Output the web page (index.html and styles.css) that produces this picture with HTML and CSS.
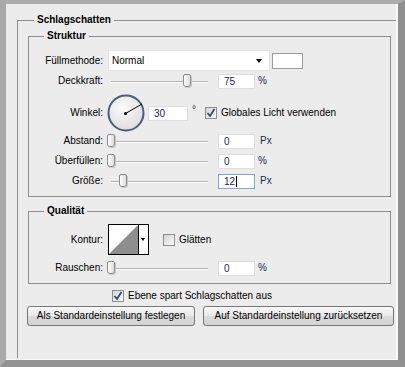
FILE: index.html
```html
<!DOCTYPE html>
<html lang="de">
<head>
    <meta charset="UTF-8">
    <title>Schlagschatten</title>
    <link rel="stylesheet" href="styles.css">
</head>
<body>
    <div class="frame">
        <div class="group outer">
            <div class="group-title">Schlagschatten</div>

            <div class="box">
                <div class="group-title">Struktur</div>
                <div class="row row-mode">
                    <span class="label">Füllmethode:</span>
                    <div class="select"><span>Normal</span><span class="arrow"></span></div>
                    <div class="swatch"></div>
                </div>
                <div class="row row-opacity">
                    <span class="label">Deckkraft:</span>
                    <div class="slider"><span class="thumb" style="left:76px"></span></div>
                    <div class="field">75</div><span class="unit">%</span>
                </div>
                <div class="row row-angle">
                    <span class="label">Winkel:</span>
                    <svg class="dial" width="38" height="38" viewBox="0 0 38 38">
                        <defs>
                            <radialGradient id="dialFill" cx="40%" cy="35%" r="70%">
                                <stop offset="0" stop-color="#fbfbfb"/>
                                <stop offset="1" stop-color="#dcdcdc"/>
                            </radialGradient>
                        </defs>
                        <circle cx="19" cy="19" r="17.5" fill="url(#dialFill)" stroke="#4d5c7c" stroke-width="2"/>
                        <line x1="18.5" y1="19.5" x2="35" y2="10" stroke="#000" stroke-width="1"/>
                        <circle cx="18.5" cy="19.5" r="1.6" fill="#000"/>
                    </svg>
                    <div class="field field-angle">30</div><span class="unit deg">°</span>
                    <span class="check check-light"><span class="checkbox checked"></span>Globales Licht verwenden</span>
                </div>
                <div class="row row-slider">
                    <span class="label">Abstand:</span>
                    <div class="slider"><span class="thumb" style="left:0px"></span></div>
                    <div class="field">0</div><span class="unit px">Px</span>
                </div>
                <div class="row row-slider">
                    <span class="label">Überfüllen:</span>
                    <div class="slider"><span class="thumb" style="left:0px"></span></div>
                    <div class="field">0</div><span class="unit">%</span>
                </div>
                <div class="row row-slider">
                    <span class="label">Größe:</span>
                    <div class="slider"><span class="thumb" style="left:12px"></span></div>
                    <div class="field focus">12<span class="caret"></span></div><span class="unit px">Px</span>
                </div>
            </div>

            <div class="box quality">
                <div class="group-title">Qualität</div>
                <div class="row row-contour">
                    <span class="label">Kontur:</span>
                    <div class="contour">
                        <svg width="29" height="29" viewBox="0 0 29 29">
                            <rect width="29" height="29" fill="#fff"/>
                            <polygon points="0,29 29,0 29,29" fill="#8e8e8e"/>
                        </svg>
                        <span class="contour-arrow"></span>
                    </div>
                    <span class="check check-smooth"><span class="checkbox"></span>Glätten</span>
                </div>
                <div class="row row-slider row-noise">
                    <span class="label">Rauschen:</span>
                    <div class="slider"><span class="thumb" style="left:0px"></span></div>
                    <div class="field">0</div><span class="unit">%</span>
                </div>
            </div>

            <div class="row row-knockout">
                <span class="check"><span class="checkbox checked"></span>Ebene spart Schlagschatten aus</span>
            </div>

            <div class="buttons">
                <button class="btn btn-save">Als Standardeinstellung festlegen</button>
                <button class="btn btn-reset">Auf Standardeinstellung zurücksetzen</button>
            </div>
        </div>
    </div>
</body>
</html>
```

FILE: styles.css
```css
body { margin: 0; font-family: "Liberation Sans", Arial, sans-serif; font-size: 10px; line-height: 12px; color: #000; }

.frame { width: 405px; height: 367px; box-sizing: border-box; display: flex; flex-direction: column; background: #ececec;
    border-style: solid; border-width: 4px 7px 7px 6px; border-color: #acacac #8f8f8f #939393 #a9a9a9;
    box-shadow: inset -2px -1px 0 #fafafa; }

.group { border-top: 1px solid #8e8e8e; border-left: 1px solid #8e8e8e; }
.outer { flex: 1; margin: 16px 2px 2px 11px; }
.group-title { display: table; margin: -7px 0 0 16px; padding: 0 3px; background: #ececec; font-weight: bold; }

.box { width: 363px; box-sizing: border-box; margin: 10px 0 0 10px; padding-bottom: 7px; border: 1px solid #8e8e8e; }
.box .group-title { margin-left: 15px; }
.quality { margin-top: 14px; }

.row { display: flex; align-items: center; }
.label { width: 74px; margin-right: 4px; text-align: right; }

.row-mode { height: 21px; margin-top: 8px; }
.row-opacity { height: 16px; margin-top: 2px; }
.row-angle { height: 38px; margin-top: 5px; }
.row-slider { height: 16px; margin-top: 4px; }
.row-angle + .row-slider { margin-top: 1px; }
.row-contour { height: 31px; margin-top: 7px; }
.row-noise { margin-top: 5px; }

.select { width: 162px; height: 21px; box-sizing: border-box; margin-left: 1px; padding: 0 0 0 3px; display: flex; align-items: center; justify-content: space-between; background: #fff; border: 1px solid #e4e4e4; }
.arrow { width: 0; height: 0; margin-right: 7px; border-left: 3.5px solid transparent; border-right: 3.5px solid transparent; border-top: 4px solid #000; }
.swatch { width: 31px; height: 16px; box-sizing: border-box; margin-left: 2px; background: #fff; border: 1px solid #9c9c9c; }

.slider { position: relative; width: 101px; height: 16px; margin-right: 10px; }
.slider::before { content: ""; position: absolute; left: 4px; right: 0; top: 8px; height: 1px; background: #b4b4b4; box-shadow: 0 1px 0 #fdfdfd; }
.thumb { position: absolute; top: 1px; width: 8px; height: 13px; box-sizing: border-box; border: 1px solid #8c8c8c; border-radius: 2px 2px 3px 3px; background: linear-gradient(90deg, #fefefe, #dedede); box-shadow: 1px 1px 0 #c8c8c8; }

.field { width: 37px; height: 15px; box-sizing: border-box; padding-left: 5px; background: #fff; border: 1px solid #dedede; color: #1b2850; line-height: 13px; }
.field-angle { width: 40px; margin-left: 3px; }
.focus { border-color: #86a6cf; }
.caret { display: inline-block; width: 1px; height: 11px; margin-left: 1px; vertical-align: -2px; background: #000; }
.unit { margin-left: 3px; color: #1b2850; }
.px { margin-left: 5px; }
.deg { margin-left: 4px; align-self: flex-start; margin-top: 10px; }

.check { display: flex; align-items: center; }
.checkbox { width: 12px; height: 12px; box-sizing: border-box; margin-right: 4px; border: 1px solid #8f8f8f; background: linear-gradient(135deg, #d4d4d4, #fbfbfb); }
.checked { background-image: url("data:image/svg+xml,%3Csvg xmlns='http://www.w3.org/2000/svg' width='10' height='10'%3E%3Cpath d='M1.5 5 L4 8 L8.5 1' fill='none' stroke='%23334a78' stroke-width='1.8'/%3E%3C/svg%3E"), linear-gradient(135deg, #d4d4d4, #fbfbfb); }
.check-light { margin-left: 9px; }
.check-smooth { margin-left: 14px; }

.contour { display: flex; width: 41px; height: 31px; box-sizing: border-box; margin-left: 1px; border: 1px solid #000; }
.contour svg { display: block; }
.contour-arrow { flex: 1; position: relative; border-left: 1px solid #000; background: #fff; }
.contour-arrow::after { content: ""; position: absolute; left: 2px; top: 13px; border-left: 2.5px solid transparent; border-right: 2.5px solid transparent; border-top: 3px solid #000; }

.row-knockout { height: 13px; margin: 5px 0 0 94px; }

.buttons { display: flex; gap: 8px; margin: 4px 0 0 9px; }
.btn { height: 20px; padding: 0; font: inherit; color: #000; border: 1px solid #767676; border-radius: 3px;
    background: linear-gradient(#f9f9f9, #e8e8e8 48%, #dcdcdc 52%, #d2d2d2); }
.btn-save { width: 168px; }
.btn-reset { width: 191px; }
```
